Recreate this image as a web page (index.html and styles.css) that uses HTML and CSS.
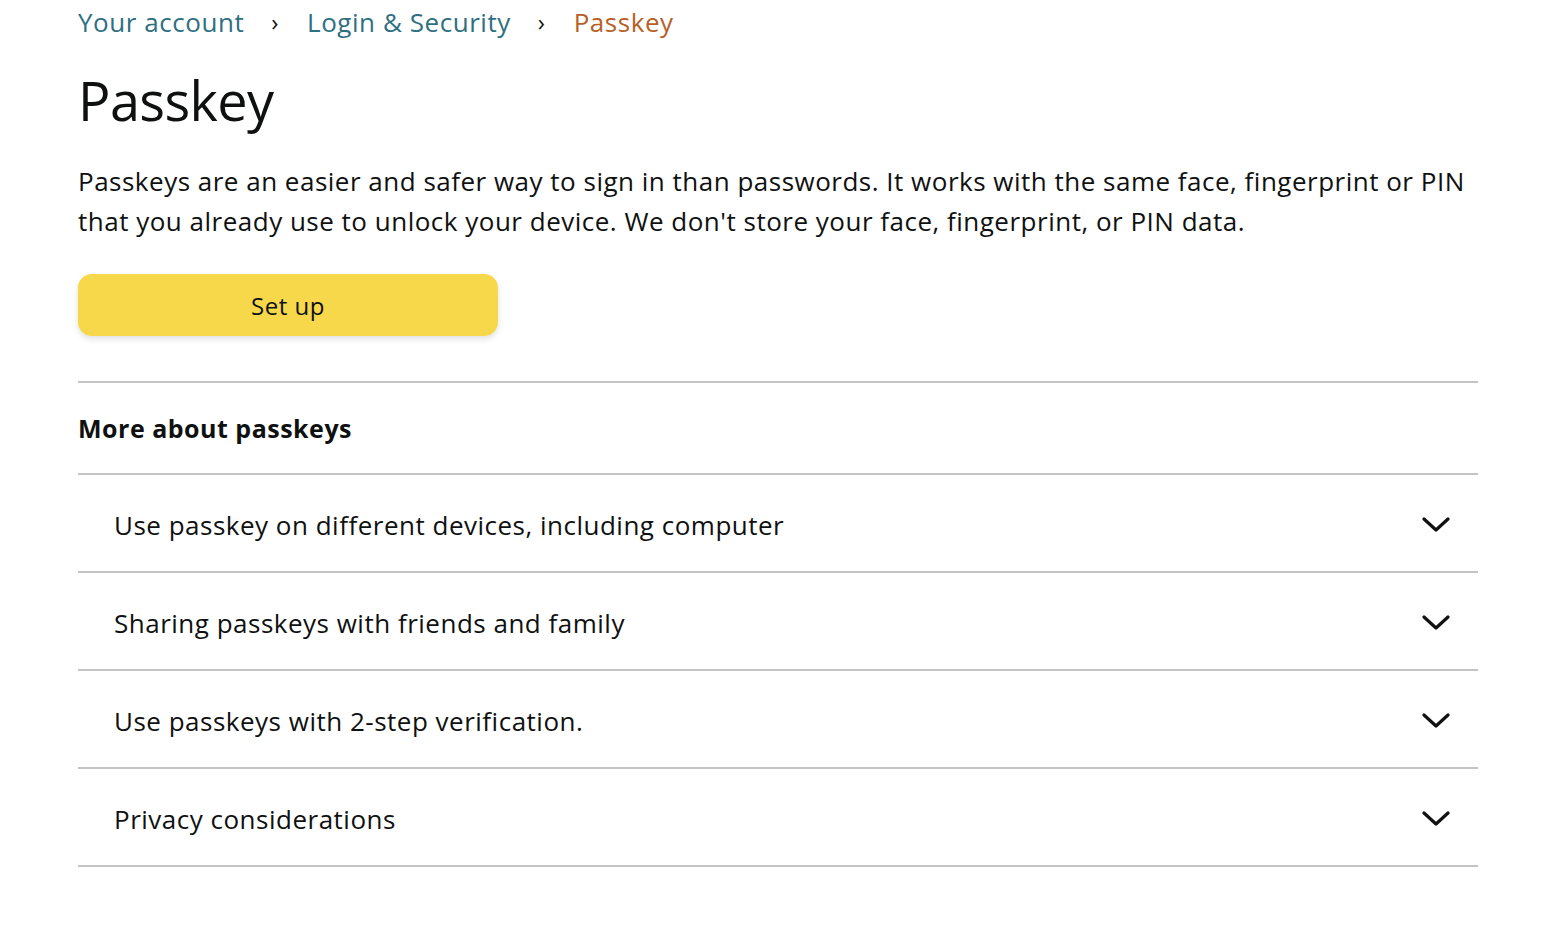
FILE: index.html
```html
<!DOCTYPE html>
<html lang="en">
<head>
<meta charset="utf-8">
<title>Passkey</title>
<link rel="stylesheet" href="styles.css">
</head>
<body>
<main class="page">
  <nav class="crumbs">
    <a class="crumb" href="#">Your account</a>
    <span class="sep">›</span>
    <a class="crumb" href="#">Login &amp; Security</a>
    <span class="sep">›</span>
    <span class="crumb current">Passkey</span>
  </nav>
  <h1 class="title">Passkey</h1>
  <p class="intro">Passkeys are an easier and safer way to sign in than passwords. It works with the same face, fingerprint or PIN that you already use to unlock your device. We don't store your face, fingerprint, or PIN data.</p>
  <button class="setup" type="button">Set up</button>
  <section class="more">
    <h2 class="more-title">More about passkeys</h2>
    <ul class="faq">
      <li class="faq-row"><span class="faq-text">Use passkey on different devices, including computer</span><svg class="chev" viewBox="0 0 28 16" width="28" height="16"><path d="M2 2 L14 13 L26 2" fill="none" stroke="#111" stroke-width="3.2" stroke-linecap="round" stroke-linejoin="round"/></svg></li>
      <li class="faq-row"><span class="faq-text">Sharing passkeys with friends and family</span><svg class="chev" viewBox="0 0 28 16" width="28" height="16"><path d="M2 2 L14 13 L26 2" fill="none" stroke="#111" stroke-width="3.2" stroke-linecap="round" stroke-linejoin="round"/></svg></li>
      <li class="faq-row"><span class="faq-text">Use passkeys with 2-step verification.</span><svg class="chev" viewBox="0 0 28 16" width="28" height="16"><path d="M2 2 L14 13 L26 2" fill="none" stroke="#111" stroke-width="3.2" stroke-linecap="round" stroke-linejoin="round"/></svg></li>
      <li class="faq-row"><span class="faq-text">Privacy considerations</span><svg class="chev" viewBox="0 0 28 16" width="28" height="16"><path d="M2 2 L14 13 L26 2" fill="none" stroke="#111" stroke-width="3.2" stroke-linecap="round" stroke-linejoin="round"/></svg></li>
    </ul>
  </section>
</main>
</body>
</html>
```
FILE: styles.css
```css
* { box-sizing: border-box; }
html, body { margin: 0; padding: 0; background: #fff; }
body {
  font-family: "Open Sans", "Liberation Sans", sans-serif;
  color: #0f1111;
}
.page {
  width: 1400px;
  margin-left: 78px;
  padding-top: 4px;
}
.crumbs {
  display: flex;
  align-items: center;
  font-size: 26px;
  line-height: 36px;
  letter-spacing: 0.55px;
}
.crumb { color: #2f6f82; text-decoration: none; }
.crumb.current { color: #b85f27; }
.sep { color: #111; margin: 0 28px 0 27px; font-size: 24px; }
.title {
  margin: 24px 0 0;
  font-size: 54px;
  font-weight: 500;
  line-height: 72px;
  letter-spacing: -0.6px;
}
.intro {
  margin: 25px 0 0;
  font-size: 26px;
  line-height: 40px;
  letter-spacing: 0.5px;
}
.setup {
  display: block;
  margin-top: 33px;
  width: 420px;
  height: 62px;
  border: none;
  border-radius: 14px;
  background: #f7d84b;
  box-shadow: 0 3px 6px rgba(0,0,0,0.12);
  font-family: inherit;
  font-size: 24px;
  color: #0f1111;
  letter-spacing: 0.5px;
}
.more {
  margin-top: 45px;
  border-top: 2px solid #c4c4c4;
}
.more-title {
  margin: 0;
  height: 92px;
  display: flex;
  align-items: center;
  font-size: 25px;
  font-weight: 700;
  letter-spacing: 0.5px;
  border-bottom: 2px solid #c4c4c4;
}
.faq { list-style: none; margin: 0; padding: 0; }
.faq-row {
  height: 98px;
  display: flex;
  align-items: center;
  justify-content: space-between;
  padding: 3px 28px 0 36px;
  border-bottom: 2px solid #c4c4c4;
  font-size: 26px;
  letter-spacing: 0.5px;
}
.chev { display: block; margin-top: 0; }
```
